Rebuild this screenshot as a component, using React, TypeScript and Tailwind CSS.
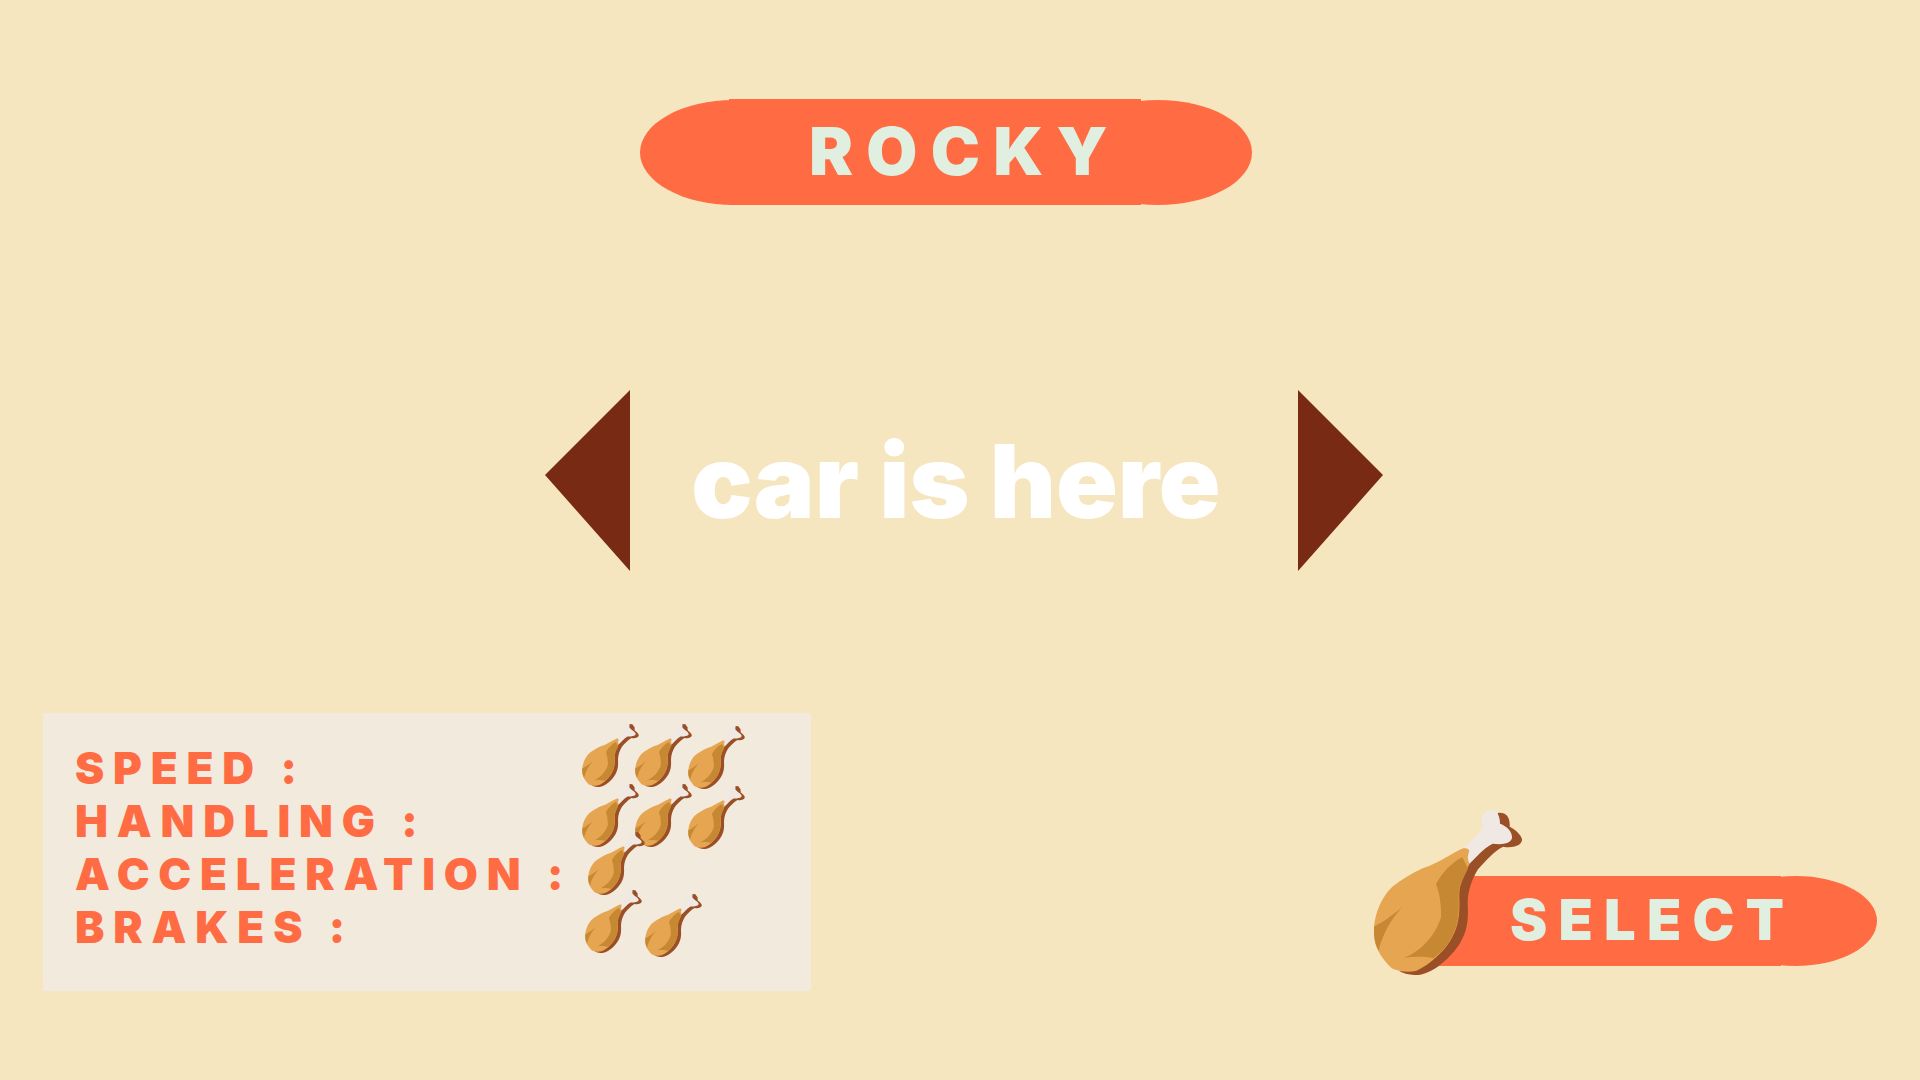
import React from "react";

type DrumstickProps = { className: string; small?: boolean };

function Drumstick({ className, small = false }: DrumstickProps) {
  return (
    <svg viewBox="42 30 444 495" className={className} aria-hidden="true">
      <path
        fill="#9a4f26"
        d="M414 39C437 36 451 50 449 80C470 90 488 110 486 121C482 141 452 144 429 140C400 155 376 184 354 208C336 238 323 272 323 310C325 352 324 385 305 420C284 462 225 520 175 525C152 526 130 521 118 513L240 400L270 240L400 100Z"
      />
      {small && <path fill="#9a4f26" d="M412 30L436 32L452 56L456 90L424 66Z" />}
      <path
        fill="#f0e8e3"
        d={
          small
            ? "M310 146C335 122 356 102 368 82C358 52 368 32 392 30C405 30 408 44 414 60L432 78C454 90 466 104 460 114C452 124 436 127 398 129C370 144 345 176 328 192L312 172Z"
            : "M310 146C335 122 356 102 368 82C360 56 368 32 392 30C413 32 420 48 420 71C441 78 458 96 456 114C452 131 428 135 398 131C370 144 345 176 328 192L312 172Z"
        }
      />
      <path
        fill="#e6a550"
        d="M310 145C322 143 329 148 327 156C324 166 320 174 329 192C308 226 296 255 298 300C300 355 292 386 272 420C250 458 205 496 170 512C145 519 115 514 95 505C77 488 58 464 50 442C41 420 42 400 42 380C46 338 65 290 97 260C125 240 155 220 188 205C235 191 275 160 310 145Z"
      />
      <path
        fill="#c68833"
        d="M307 172L324 206C306 240 294 270 296 300C298 348 293 378 275 412C262 438 240 460 220 475C190 468 160 470 133 473C180 456 225 410 243 352C244 318 240 283 228 252C245 220 276 186 307 172Z"
      />
      <path fill="#c68833" d="M42 380C74 364 105 340 130 319C98 350 68 400 56 452C44 430 41 410 42 380Z" />
    </svg>
  );
}

const labels = ["Speed :", "Handling :", "Acceleration :", "Brakes :"];

function Rating({ name, value, className }: { name: string; value: number; className: string }) {
  return (
    <div role="img" aria-label={`${name} ${value}`} className={`flex ${className}`}>
      {Array.from({ length: value }, (_, i) => (
        <Drumstick key={i} small className="h-[63px] w-[57px] shrink-0" />
      ))}
    </div>
  );
}

function ArrowButton({ label, points }: { label: string; points: string }) {
  return (
    <button type="button" aria-label={label} className="shrink-0 cursor-pointer">
      <svg viewBox="0 0 85 181" className="block h-[181px] w-[85px]" aria-hidden="true">
        <polygon points={points} fill="#782a15" />
      </svg>
    </button>
  );
}

export default function App() {
  return (
    <main className="flex min-h-screen flex-col bg-[#f5e6bf] font-['Inter',sans-serif] font-black">
      <header className="flex justify-center pt-[99px] pr-7">
        <div className="flex items-end">
          <div className="-mr-[99px] h-[105px] w-[188px] rounded-[50%] bg-[#ff6c43]" />
          <div className="flex h-[106px] w-[412px] items-center bg-[#ff6c43] pb-0.5 pl-20">
            <h1 className="relative z-10 text-[66px] leading-none tracking-[0.2em] whitespace-nowrap text-[#e0efe0] uppercase">
              Rocky
            </h1>
          </div>
          <div className="-ml-[77px] h-[105px] w-[188px] rounded-[50%] bg-[#ff6c43]" />
        </div>
      </header>

      <section aria-label="Car" className="mt-[185px] flex justify-center pl-2">
        <ArrowButton label="Previous car" points="85,0 0,85 85,181" />
        <p className="w-[668px] pt-10 pr-4 text-center text-[102px] leading-none whitespace-nowrap text-white">
          car is here
        </p>
        <ArrowButton label="Next car" points="0,0 85,85 0,181" />
      </section>

      <footer className="mt-[142px] flex items-end justify-between px-[43px]">
        <section aria-label="Car stats" className="flex h-[278px] w-[768px] bg-[#f2eadd]">
          <ul className="w-[539px] pt-[29px] pl-8 text-[44px] leading-[53px] tracking-[0.2em] whitespace-nowrap text-[#ff6c43] uppercase">
            {labels.map((label) => (
              <li key={label}>{label}</li>
            ))}
          </ul>
          <div className="pt-[11px]">
            <Rating name="Speed" value={3} className="-space-x-1 [&>*:nth-child(3)]:mt-0.5" />
            <Rating name="Handling" value={3} className="-mt-[5px] -space-x-1 [&>*:nth-child(3)]:mt-0.5" />
            <Rating name="Acceleration" value={1} className="-mt-[17px] pl-[6px]" />
            <Rating name="Brakes" value={2} className="-mt-[5px] gap-[3px] pl-[3px] [&>*:nth-child(2)]:mt-1" />
          </div>
        </section>

        <button type="button" className="mb-4 flex cursor-pointer items-end">
          <Drumstick className="relative z-10 h-[165px] w-[148px]" />
          <span className="mb-[9px] -ml-[102px] flex">
            <span className="flex h-[90px] w-[361px] items-center bg-[#ff6c43] pb-0.5 pl-[90px]">
              <span className="relative z-10 text-[56px] leading-none tracking-[0.2em] whitespace-nowrap text-[#e0efe0] uppercase">
                Select
              </span>
            </span>
            <span className="-ml-[66px] h-[90px] w-[162px] rounded-[50%] bg-[#ff6c43]" />
          </span>
        </button>
      </footer>
    </main>
  );
}
